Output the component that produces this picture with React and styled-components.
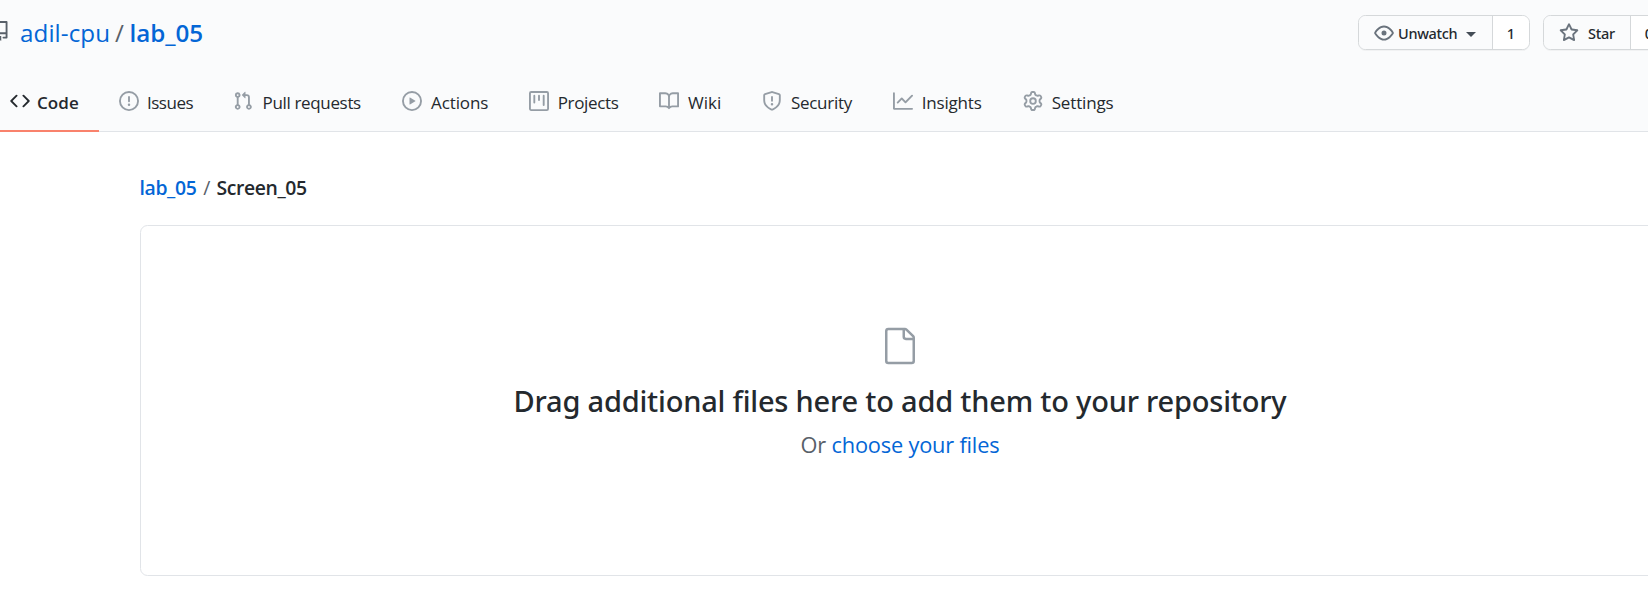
import React from 'react';
import styled, { createGlobalStyle } from 'styled-components';

const GlobalStyle = createGlobalStyle`
  *, *::before, *::after { box-sizing: border-box; }
  html, body { margin: 0; overflow: hidden; background: #fff; }
  body {
    color: #24292e;
    font-family: "Segoe UI", "Open Sans", "Noto Sans", sans-serif;
  }
`;

const ICONS = {
  repo: 'M2 2.5A2.5 2.5 0 014.5 0h8.75a.75.75 0 01.75.75v12.5a.75.75 0 01-.75.75h-2.5a.75.75 0 110-1.5h1.75v-2h-8a1 1 0 00-.714 1.7.75.75 0 01-1.072 1.05A2.495 2.495 0 012 11.5v-9zm10.5-1V9h-8c-.356 0-.694.074-1 .208V2.5a1 1 0 011-1h8zM5 12.25v3.25a.25.25 0 00.4.2l1.45-1.087a.25.25 0 01.3 0L8.6 15.7a.25.25 0 00.4-.2v-3.25a.25.25 0 00-.25-.25h-3.5a.25.25 0 00-.25.25z',
  code: 'M4.72 3.22a.75.75 0 011.06 1.06L2.06 8l3.72 3.72a.75.75 0 11-1.06 1.06L.47 8.53a.75.75 0 010-1.06l4.25-4.25zm6.56 0a.75.75 0 10-1.06 1.06L13.94 8l-3.72 3.72a.75.75 0 101.06 1.06l4.25-4.25a.75.75 0 000-1.06l-4.25-4.25z',
  issue: 'M8 1.5a6.5 6.5 0 100 13 6.5 6.5 0 000-13zM0 8a8 8 0 1116 0A8 8 0 010 8zm9 3a1 1 0 11-2 0 1 1 0 012 0zm-.25-6.25a.75.75 0 00-1.5 0v3.5a.75.75 0 001.5 0v-3.5z',
  pull: 'M7.177 3.073L9.573.677A.25.25 0 0110 .854v4.792a.25.25 0 01-.427.177L7.177 3.427a.25.25 0 010-.354zM3.75 2.5a.75.75 0 100 1.5.75.75 0 000-1.5zm-2.25.75a2.25 2.25 0 113 2.122v5.256a2.251 2.251 0 11-1.5 0V5.372A2.25 2.25 0 011.5 3.25zM11 2.5h-1V4h1a1 1 0 011 1v5.628a2.251 2.251 0 101.5 0V5A2.5 2.5 0 0011 2.5zm1 10.25a.75.75 0 111.5 0 .75.75 0 01-1.5 0zM3.75 12a.75.75 0 100 1.5.75.75 0 000-1.5z',
  play: 'M1.5 8a6.5 6.5 0 1113 0 6.5 6.5 0 01-13 0zM8 0a8 8 0 100 16A8 8 0 008 0zM6.379 5.227A.25.25 0 006 5.442v5.117a.25.25 0 00.379.214l4.264-2.559a.25.25 0 000-.428L6.379 5.227z',
  project: 'M1.75 0A1.75 1.75 0 000 1.75v12.5C0 15.216.784 16 1.75 16h12.5A1.75 1.75 0 0016 14.25V1.75A1.75 1.75 0 0014.25 0H1.75zM1.5 1.75a.25.25 0 01.25-.25h12.5a.25.25 0 01.25.25v12.5a.25.25 0 01-.25.25H1.75a.25.25 0 01-.25-.25V1.75zM11.75 3a.75.75 0 00-.75.75v7.5a.75.75 0 001.5 0v-7.5a.75.75 0 00-.75-.75zm-8.25.75a.75.75 0 011.5 0v5.5a.75.75 0 01-1.5 0v-5.5zM8 3a.75.75 0 00-.75.75v3.5a.75.75 0 001.5 0v-3.5A.75.75 0 008 3z',
  book: 'M0 1.75A.75.75 0 01.75 1h4.253c1.227 0 2.317.59 3 1.501A3.744 3.744 0 0111.006 1h4.245a.75.75 0 01.75.75v10.5a.75.75 0 01-.75.75h-4.507a2.25 2.25 0 00-1.591.659l-.622.621a.75.75 0 01-1.06 0l-.622-.621A2.25 2.25 0 005.258 13H.75a.75.75 0 01-.75-.75V1.75zm8.755 3a2.25 2.25 0 012.25-2.25H14.5v9h-3.757c-.71 0-1.4.201-1.992.572l.004-7.322zm-1.504 7.324l.004-5.073-.002-2.253A2.25 2.25 0 005.003 2.5H1.5v9h3.757a3.75 3.75 0 011.994.574z',
  shield: 'M7.467.133a1.75 1.75 0 011.066 0l5.25 1.68A1.75 1.75 0 0115 3.48V7c0 1.566-.32 3.182-1.303 4.682-.983 1.498-2.585 2.813-5.032 3.855a1.7 1.7 0 01-1.33 0c-2.447-1.042-4.049-2.357-5.032-3.855C1.32 10.182 1 8.566 1 7V3.48a1.75 1.75 0 011.217-1.667l5.25-1.68zm.61 1.429a.25.25 0 00-.153 0l-5.25 1.68a.25.25 0 00-.174.238V7c0 1.358.275 2.666 1.057 3.86.784 1.194 2.121 2.34 4.366 3.297a.2.2 0 00.154 0c2.245-.956 3.582-2.104 4.366-3.298C13.225 9.666 13.5 8.36 13.5 7V3.48a.25.25 0 00-.174-.237l-5.25-1.68zM9 10.5a1 1 0 11-2 0 1 1 0 012 0zm-.25-5.75a.75.75 0 10-1.5 0v3a.75.75 0 001.5 0v-3z',
  graph: 'M1.5 1.75a.75.75 0 00-1.5 0v12.5c0 .414.336.75.75.75h14.5a.75.75 0 000-1.5H1.5V1.75zm14.28 2.53a.75.75 0 00-1.06-1.06L10 7.94 7.53 5.47a.75.75 0 00-1.06 0L3.22 8.72a.75.75 0 001.06 1.06L7 7.06l2.47 2.47a.75.75 0 001.06 0l5.25-5.25z',
  gear: 'M7.429 1.525a6.593 6.593 0 011.142 0c.036.003.108.036.137.146l.289 1.105c.147.56.55.967.997 1.189.174.086.341.183.501.29.417.278.97.423 1.53.27l1.102-.303c.11-.03.175.016.195.046.219.31.41.641.573.989.014.031.022.11-.059.19l-.815.806c-.411.406-.562.957-.53 1.456a4.588 4.588 0 010 .582c-.032.499.119 1.05.53 1.456l.815.806c.08.08.073.159.059.19a6.494 6.494 0 01-.573.99c-.02.029-.086.074-.195.045l-1.103-.303c-.559-.153-1.112-.008-1.529.27-.16.107-.327.204-.5.29-.449.222-.851.628-.998 1.189l-.289 1.105c-.029.11-.101.143-.137.146a6.613 6.613 0 01-1.142 0c-.036-.003-.108-.037-.137-.146l-.289-1.105c-.147-.56-.55-.967-.997-1.189a4.502 4.502 0 01-.501-.29c-.417-.278-.97-.423-1.53-.27l-1.102.303c-.11.03-.175-.016-.195-.046a6.492 6.492 0 01-.573-.989c-.014-.031-.022-.11.059-.19l.815-.806c.411-.406.562-.957.53-1.456a4.587 4.587 0 010-.582c.032-.499-.119-1.05-.53-1.456l-.815-.806c-.08-.08-.073-.159-.059-.19a6.44 6.44 0 01.573-.99c.02-.029.086-.075.195-.045l1.103.303c.559.153 1.112.008 1.529-.27.16-.107.327-.204.5-.29.449-.222.851-.628.998-1.189l.289-1.105c.029-.11.101-.143.137-.146zM8 0c-.236 0-.47.01-.701.03-.743.065-1.29.615-1.458 1.261l-.29 1.106c-.017.066-.078.158-.211.224a5.994 5.994 0 00-.668.386c-.123.082-.233.09-.3.071L3.27 2.776c-.644-.177-1.392.02-1.82.63a7.977 7.977 0 00-.704 1.217c-.315.675-.111 1.422.363 1.891l.815.806c.05.048.098.147.088.294a6.084 6.084 0 000 .772c.01.147-.038.246-.088.294l-.815.806c-.474.469-.678 1.216-.363 1.891.2.428.436.835.704 1.218.428.609 1.176.806 1.82.63l1.103-.303c.066-.019.176-.011.299.071.213.143.436.272.668.386.133.066.194.158.212.224l.289 1.106c.169.646.715 1.196 1.458 1.26a8.094 8.094 0 001.402 0c.743-.064 1.29-.614 1.458-1.26l.29-1.106c.017-.066.078-.158.211-.224a5.98 5.98 0 00.668-.386c.123-.082.233-.09.3-.071l1.102.302c.644.177 1.392-.02 1.82-.63.268-.382.505-.789.704-1.217.315-.675.111-1.422-.364-1.891l-.814-.806c-.05-.048-.098-.147-.088-.294a6.1 6.1 0 000-.772c-.01-.147.039-.246.088-.294l.814-.806c.475-.469.679-1.216.364-1.891a7.992 7.992 0 00-.704-1.218c-.428-.609-1.176-.806-1.82-.63l-1.103.303c-.066.019-.176.011-.299-.071a5.991 5.991 0 00-.668-.386c-.133-.066-.194-.158-.212-.224L10.16 1.29C9.99.645 9.444.095 8.701.031A8.094 8.094 0 008 0zm1.5 8a1.5 1.5 0 11-3 0 1.5 1.5 0 013 0zM11 8a3 3 0 11-6 0 3 3 0 016 0z',
  eye: 'M1.679 7.932c.412-.621 1.242-1.75 2.366-2.717C5.175 4.242 6.527 3.5 8 3.5c1.473 0 2.824.742 3.955 1.715 1.124.967 1.954 2.096 2.366 2.717a.119.119 0 010 .136c-.412.621-1.242 1.75-2.366 2.717C10.825 11.758 9.473 12.5 8 12.5c-1.473 0-2.824-.742-3.955-1.715C2.92 9.818 2.09 8.69 1.679 8.068a.119.119 0 010-.136zM8 2c-1.981 0-3.67.992-4.933 2.078C1.797 5.169.88 6.423.43 7.1a1.619 1.619 0 000 1.798c.45.678 1.367 1.932 2.637 3.024C4.329 13.008 6.019 14 8 14c1.981 0 3.67-.992 4.933-2.078 1.27-1.091 2.187-2.345 2.637-3.023a1.619 1.619 0 000-1.798c-.45-.678-1.367-1.932-2.637-3.023C11.671 2.992 9.981 2 8 2zm0 8a2 2 0 100-4 2 2 0 000 4z',
  star: 'M8 .25a.75.75 0 01.673.418l1.882 3.815 4.21.612a.75.75 0 01.416 1.279l-3.046 2.97.719 4.192a.75.75 0 01-1.088.791L8 12.347l-3.766 1.98a.75.75 0 01-1.088-.79l.72-4.194L.818 6.374a.75.75 0 01.416-1.28l4.21-.611L7.327.668A.75.75 0 018 .25zm0 2.445L6.615 5.5a.75.75 0 01-.564.41l-3.097.45 2.24 2.184a.75.75 0 01.216.664l-.528 3.084 2.769-1.456a.75.75 0 01.698 0l2.77 1.456-.53-3.084a.75.75 0 01.216-.664l2.24-2.183-3.096-.45a.75.75 0 01-.564-.41L8 2.694v.001z',
  file: 'M5 2.5a.5.5 0 00-.5.5v18a.5.5 0 00.5.5h14a.5.5 0 00.5-.5V8.5h-4a2 2 0 01-2-2v-4H5zm10 0v4a.5.5 0 00.5.5h4a.5.5 0 00-.146-.336l-4.018-4.018A.5.5 0 0015 2.5zM3 3a2 2 0 012-2h9.982a2 2 0 011.414.586l4.018 4.018A2 2 0 0121 7.018V21a2 2 0 01-2 2H5a2 2 0 01-2-2V3z',
};

const Svg = styled.svg`
  display: block;
  flex: none;
  fill: ${(p) => p.$color};
`;

const Icon = ({ name, color = '#959da5', size = 20, box = 16 }) => (
  <Svg width={size} height={size} viewBox={`0 0 ${box} ${box}`} $color={color} aria-hidden="true">
    <path fillRule="evenodd" d={ICONS[name]} />
  </Svg>
);

const Page = styled.div`
  width: 1648px;
  height: 589px;
  overflow: hidden;
`;

const Header = styled.header`
  display: flex;
  flex-direction: column;
  height: 132px;
  background: #fafbfc;
  border-bottom: 1px solid #e1e4e8;
`;

const TitleRow = styled.div`
  display: flex;
  align-items: flex-start;
  justify-content: space-between;
  height: 72px;
  flex: none;
`;

const RepoTitle = styled.h1`
  display: flex;
  align-items: flex-start;
  margin: 0 0 0 -10px;
  padding-top: 21px;
  font-weight: 400;
`;

const TitleText = styled.span`
  display: block;
  margin: -5px 0 0 ${(p) => p.$gap}px;
  color: ${(p) => p.$color || '#0366d6'};
  font-size: 24.2px;
  line-height: 33px;
  font-weight: ${(p) => p.$weight || 400};
  letter-spacing: ${(p) => p.$spacing || 0}px;
`;

const Actions = styled.div`
  display: flex;
  gap: 13px;
  width: 290px;
  padding-top: 15px;
`;

const ButtonGroup = styled.div`
  display: flex;
  flex: none;
  height: 35px;
  border: 1px solid #d5d8da;
  border-radius: 7.5px;
  box-shadow: 0 1px 0 rgba(27, 31, 35, 0.04);
  overflow: hidden;
  font-family: "Segoe UI", "Noto Sans", sans-serif;
  font-size: 14.5px;
  line-height: 34px;
  font-weight: 500;
`;

const ActionButton = styled.button`
  display: flex;
  align-items: center;
  width: ${(p) => p.$width}px;
  height: 33px;
  padding: 0 0 0 15px;
  border: 0;
  border-right: 1px solid #d5d8da;
  background: #fafbfc;
  color: #24292e;
  font: inherit;
`;

const ActionLabel = styled.span`
  margin-left: ${(p) => p.$gap}px;
  letter-spacing: ${(p) => p.$spacing}px;
`;

const Caret = styled.span`
  margin: 3px 0 0 9px;
  border: 5px solid transparent;
  border-top-color: #444d56;
  border-bottom: 0;
`;

const Count = styled.span`
  width: 36px;
  background: #fff;
  text-align: center;
`;

const Tabs = styled.nav`
  display: flex;
  height: 60px;
  margin: 0 0 -1px -10px;
  flex: none;
`;

const Tab = styled.a`
  display: flex;
  align-items: center;
  flex: none;
  width: ${(p) => p.$width}px;
  padding-left: 20px;
  border-bottom: 2px solid ${(p) => (p.$active ? '#f9826c' : 'transparent')};
  color: #24292e;
  font-size: 17px;
  line-height: 24px;
  font-weight: ${(p) => (p.$active ? 600 : 400)};
`;

const TabLabel = styled.span`
  margin: 4px 0 0 ${(p) => p.$gap}px;
  letter-spacing: ${(p) => p.$spacing}px;
  white-space: nowrap;
`;

const Main = styled.main`
  padding: 42px 0 0 140px;
`;

const Breadcrumb = styled.div`
  display: flex;
  height: 51px;
  font-size: 19.4px;
  line-height: 27px;
  font-weight: 600;
`;

const Crumb = styled.span`
  color: ${(p) => p.$color};
  font-weight: ${(p) => p.$weight || 600};
  letter-spacing: ${(p) => p.$spacing || 0}px;
  margin-left: ${(p) => p.$gap || 0}px;
`;

const DropZone = styled.section`
  display: flex;
  flex-direction: column;
  align-items: center;
  width: 1520px;
  height: 351px;
  padding-top: 100px;
  border: 1px solid #e1e4e8;
  border-radius: 7.5px;
`;

const DropHeading = styled.h2`
  margin: 15px 0 0;
  font-family: "Segoe UI", "Noto Sans", sans-serif;
  font-size: 29px;
  line-height: 40px;
  font-weight: 500;
  letter-spacing: -0.2px;
  white-space: nowrap;
`;

const DropHint = styled.p`
  margin: 9px 0 0;
  color: #586069;
  font-size: 21.8px;
  line-height: 30px;
  letter-spacing: -0.2px;
`;

const HintLink = styled.a`
  color: #0366d6;
`;

const tabs = [
  { icon: 'code', label: 'Code', width: 109, spacing: 0.1, gap: 7, active: true },
  { icon: 'issue', label: 'Issues', width: 113.5, spacing: -0.5, gap: 8 },
  { icon: 'pull', label: 'Pull requests', width: 169.5, spacing: -0.34, gap: 10 },
  { icon: 'play', label: 'Actions', width: 127, spacing: -0.1, gap: 9 },
  { icon: 'project', label: 'Projects', width: 130, spacing: -0.35, gap: 8.7 },
  { icon: 'book', label: 'Wiki', width: 103, spacing: 0, gap: 9 },
  { icon: 'shield', label: 'Security', width: 131, spacing: -0.3, gap: 9 },
  { icon: 'graph', label: 'Insights', width: 130, spacing: -0.2, gap: 8.8 },
  { icon: 'gear', label: 'Settings', width: 120, spacing: -0.15, gap: 8.7 },
];

export default function App() {
  return (
    <Page>
      <GlobalStyle />
      <Header>
        <TitleRow>
          <RepoTitle>
            <Icon name="repo" color="#586069" />
            <TitleText $gap={10} $spacing={0.08}>adil-cpu</TitleText>
            <TitleText $gap={5} $color="#586069">/</TitleText>
            <TitleText $gap={5.5} $weight={600} $spacing={-0.05}>lab_05</TitleText>
          </RepoTitle>
          <Actions>
            <ButtonGroup>
              <ActionButton $width={134}>
                <Icon name="eye" color="#6a737d" />
                <ActionLabel $gap={4} $spacing={-0.32}>Unwatch</ActionLabel>
                <Caret />
              </ActionButton>
              <Count>1</Count>
            </ButtonGroup>
            <ButtonGroup>
              <ActionButton $width={87}>
                <Icon name="star" color="#6a737d" />
                <ActionLabel $gap={9} $spacing={-0.3}>Star</ActionLabel>
              </ActionButton>
              <Count>0</Count>
            </ButtonGroup>
          </Actions>
        </TitleRow>
        <Tabs>
          {tabs.map((t) => (
            <Tab key={t.label} $width={t.width} $active={t.active}>
              <Icon name={t.icon} color={t.active ? '#24292e' : '#959da5'} />
              <TabLabel $gap={t.gap} $spacing={t.spacing}>{t.label}</TabLabel>
            </Tab>
          ))}
        </Tabs>
      </Header>
      <Main>
        <Breadcrumb>
          <Crumb $color="#0366d6" $gap={-0.5} $spacing={-0.38}>lab_05</Crumb>
          <Crumb $color="#586069" $weight={400} $gap={7}>/</Crumb>
          <Crumb $color="#24292e" $gap={6} $spacing={-0.4}>Screen_05</Crumb>
        </Breadcrumb>
        <DropZone>
          <Icon name="file" size={40} box={24} />
          <DropHeading>Drag additional files here to add them to your repository</DropHeading>
          <DropHint>Or <HintLink>choose your files</HintLink></DropHint>
        </DropZone>
      </Main>
    </Page>
  );
}
